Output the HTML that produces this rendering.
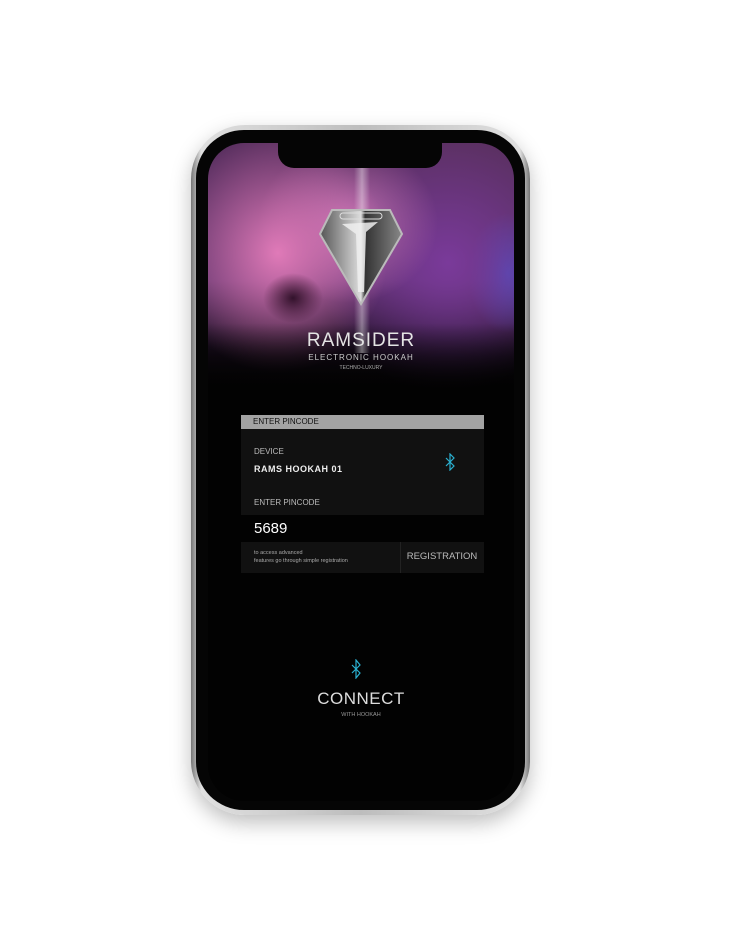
<!DOCTYPE html>
<html><head><style>
body{margin:0;width:744px;height:929px;background:#fff;position:relative;overflow:hidden;font-family:"Liberation Sans",sans-serif}
.frame{position:absolute;left:191px;top:125px;width:339px;height:690px;border-radius:54px;background:linear-gradient(90deg,#777,#e0e0e0 3%,#bdbdbd 50%,#e0e0e0 97%,#777);box-shadow:0 8px 20px rgba(0,0,0,.25)}
.body{position:absolute;left:196px;top:130px;width:329px;height:680px;border-radius:48px;background:#050505}
.screen{position:absolute;left:208px;top:143px;width:306px;height:658px;border-radius:36px;background:#020202;overflow:hidden}
.sky{position:absolute;left:0;top:0;width:306px;height:250px;
background:
radial-gradient(ellipse 30px 25px at 85px 155px,rgba(30,5,25,.85),transparent),
radial-gradient(ellipse 110px 120px at 70px 110px,#e07ab8,transparent),
radial-gradient(ellipse 90px 80px at 140px 80px,#c070b0,transparent),
radial-gradient(ellipse 130px 130px at 240px 120px,#7a3a9a,transparent),
radial-gradient(ellipse 40px 60px at 300px 130px,#4050c0,transparent),
linear-gradient(180deg,#5a3060 0%,#5a3068 55%,#140a18 85%,#020202 100%)}
.sky:after{content:"";position:absolute;left:0;right:0;bottom:0;height:70px;background:linear-gradient(transparent,#020202)}
.beam{position:absolute;left:146px;top:0;width:16px;height:210px;background:linear-gradient(90deg,transparent,rgba(255,255,255,.4),transparent)}
.notch{position:absolute;left:70px;top:0;width:164px;height:25px;background:#050505;border-radius:0 0 16px 16px}
.t{position:absolute;left:0;width:306px;text-align:center;color:#ddd}
.panel{position:absolute;left:33px;width:243px}
</style></head><body>
<div class="frame"></div>
<div class="body"></div>
<div class="screen">
<div class="sky"></div>
<div class="beam"></div>
<svg style="position:absolute;left:110px;top:65px" width="86" height="98" viewBox="0 0 86 98">
<defs><linearGradient id="g" x1="0" x2="1"><stop offset="0" stop-color="#555"/><stop offset=".5" stop-color="#ddd"/><stop offset=".55" stop-color="#333"/><stop offset="1" stop-color="#888"/></linearGradient></defs>
<polygon points="14,2 72,2 84,26 43,96 2,26" fill="url(#g)" stroke="#bbb" stroke-width="2"/>
<path d="M24,16 L60,14 L48,24 L46,84 L40,84 L38,26 Z" fill="#eee" opacity=".85"/>
<rect x="22" y="5" width="42" height="6" rx="3" fill="none" stroke="#ddd"/>
</svg>
<div class="t" style="top:187px;font-size:19px;letter-spacing:1px;color:#e4e4e4">RAMSIDER</div>
<div class="t" style="top:210px;font-size:8px;letter-spacing:1px;color:#ccc">ELECTRONIC HOOKAH</div>
<div class="t" style="top:222px;font-size:5px;color:#aaa">TECHNO-LUXURY</div>
<div class="notch"></div>
<div class="panel" style="top:272px;height:14px;background:#a3a3a3;color:#111;font-size:8px;line-height:14px;padding-left:12px;box-sizing:border-box">ENTER PINCODE</div>
<div class="panel" style="top:286px;height:86px;background:#111"></div>
<div class="t" style="left:46px;width:auto;top:304px;font-size:8px;color:#bbb">DEVICE</div>
<div class="t" style="left:46px;width:auto;top:321px;font-size:9px;color:#eee;font-weight:bold;letter-spacing:.5px">RAMS HOOKAH 01</div>
<div class="t" style="left:46px;width:auto;top:355px;font-size:8px;color:#bbb">ENTER PINCODE</div>
<svg style="position:absolute;left:237px;top:310px" width="10" height="18" viewBox="0 0 10 18"><path d="M1,5 L9,13 L5,17 L5,1 L9,5 L1,13" fill="none" stroke="#2ab0d0" stroke-width="1.2"/></svg>
<div class="t" style="left:46px;width:auto;top:377px;font-size:15px;color:#fff">5689</div>
<div class="panel" style="top:399px;height:31px;background:#111"></div>
<div style="position:absolute;left:192px;top:399px;width:1px;height:31px;background:#222"></div>
<div class="t" style="left:46px;width:auto;top:406px;font-size:5.5px;color:#aaa;text-align:left;line-height:8px">to access advanced<br>features go through simple registration</div>
<div class="t" style="left:195px;width:78px;top:408px;font-size:9.5px;color:#bbb">REGISTRATION</div>
<svg style="position:absolute;left:143px;top:516px" width="10" height="20" viewBox="0 0 10 20"><path d="M1,6 L9,14 L5,19 L5,1 L9,6 L1,14" fill="none" stroke="#2ab0d0" stroke-width="1.2"/></svg>
<div class="t" style="top:546px;font-size:17px;color:#ddd;letter-spacing:.5px">CONNECT</div>
<div class="t" style="top:569px;font-size:5.5px;color:#999">WITH HOOKAH</div>
</div>
</body></html>
